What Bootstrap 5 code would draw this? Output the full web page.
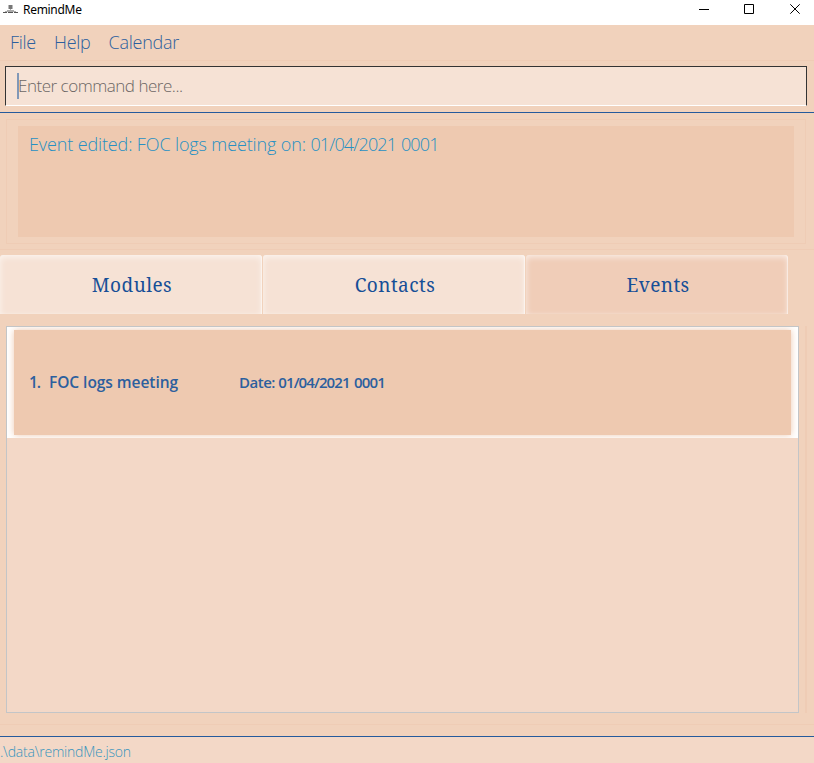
<!DOCTYPE html>
<html lang="en">
<head>
<meta charset="utf-8">
<meta name="viewport" content="width=device-width, initial-scale=1">
<title>RemindMe</title>
<link href="https://cdn.jsdelivr.net/npm/bootstrap@5.3.0/dist/css/bootstrap.min.css" rel="stylesheet">
<style>
body{height:763px;background:#f1d2bc;font-family:"Open Sans","Noto Sans",sans-serif;font-weight:300;color:#2c5f9e}
.titlebar{height:25px;background:#fff;color:#000;font:400 12px/20px "Noto Sans",sans-serif}
.titlebar span{letter-spacing:-.3px}
.menus{height:36px;border-bottom:1px solid #efccb5;font-size:18px;line-height:35px;padding-left:10px;gap:18px}
.menus a{color:#2c5f9e;text-decoration:none;white-space:nowrap;letter-spacing:-.27px}
.cmd{height:51px;padding:5px 7px 0 5px}
.cmd-box{height:40px;border:1px solid #333;border-bottom-color:#fff;background:#f6e2d5;padding-left:11px}
.caret{width:2px;height:26px;background:#8198b7}
.cmd-text{font-size:17px;color:#6b6664;white-space:nowrap;letter-spacing:-.48px;margin-left:-1px}
.result{height:138px;border-top:1px solid #255a9c;border-bottom:1px solid #efccb5;padding:6px 8px 5px 6px}
.result-frame{border:1px solid #efccb5;padding:6px 11px 6px 11px}
.result-box{background:#eec9b0;color:#2790c3;font-size:18px;line-height:25px;padding:6px 11px;white-space:nowrap;letter-spacing:-.13px}
.result-box .stamp{letter-spacing:-.87px;word-spacing:1px}
.tabs{height:64px;padding:5px 26px 0 0;gap:1px}
.tab{background:#f6e2d5;border-radius:3px 3px 0 0;box-shadow:inset 0 2px 6px rgba(255,255,255,.65),inset -1px 0 1px rgba(255,255,255,.5);font-family:"Noto Serif","Droid Serif","DejaVu Serif",serif;font-weight:400;font-size:19px;letter-spacing:.45px;color:#164f97;padding:1px 0 0 2px}
.tab.on{background:#f0cdb8}
.list-zone{height:411px;padding:12px 0 11px 6px;border-bottom:1px solid #efccb5}
.events{width:793px;flex:none;border:1px solid #c3c5c7;background:#f3d8c7}
.rail{width:2px;background:#efccb5;margin:0 7px 0 6px}
.event-row{height:111px;background:#fff;padding:3px 7px 3px 7px}
.event-card{background:#eec9b0;box-shadow:0 0 7px #eec9b0;padding-left:15px;font-size:15.5px;font-weight:600;white-space:nowrap}
.num{width:20px;letter-spacing:-1px}
.ename{width:190px;letter-spacing:-.05px}
.edate{font-size:15px;letter-spacing:-.5px}
.edate .stamp{letter-spacing:-.9px;word-spacing:1.5px}
.foot{height:27px;border-top:1px solid #255a9c;background:#f3d8c7;color:#3694bd;font-size:14px;line-height:29px;white-space:nowrap;letter-spacing:-.22px}
</style>
<script src="https://cdn.jsdelivr.net/npm/bootstrap@5.3.0/dist/js/bootstrap.bundle.min.js"></script>
</head>
<body class="d-flex flex-column overflow-hidden">
<header class="titlebar d-flex flex-shrink-0">
<svg width="23" height="20" viewBox="0 0 23 20" fill="#777"><path d="M8.500 5h4v4h-4z"/><path d="M10 9h1v2h-1zM7 10h7v1H7zM5 11h3v1H5zM13 11h3v1h-3z" fill="#aaa"/><path d="M3 12h4v1H3zM8 11.500h5v1.500H8zM14 12h4v1h-4z" fill="#555"/></svg>
<span>RemindMe</span>
<svg class="ms-auto" width="116" height="20" viewBox="698 0 116 20" fill="none" stroke="#000"><path d="M699 9.500h10M744.500 4.500h9v9h-9z"/><path d="M790.300 4.300l9.400 9.400M799.700 4.300l-9.400 9.400"/></svg>
</header>
<nav class="menus d-flex flex-shrink-0"><a href="#">File</a><a href="#">Help</a><a href="#">Calendar</a></nav>
<section class="cmd flex-shrink-0"><div class="cmd-box d-flex align-items-center"><i class="caret"></i><span class="cmd-text">Enter command here...</span></div></section>
<section class="result flex-shrink-0"><div class="result-frame h-100"><div class="result-box h-100">Event edited: FOC logs meeting on: <span class="stamp">01/04/2021 0001</span></div></div></section>
<div class="tabs d-flex flex-shrink-0">
<div class="tab flex-fill w-100 d-flex align-items-center justify-content-center"><span>Modules</span></div>
<div class="tab flex-fill w-100 d-flex align-items-center justify-content-center"><span>Contacts</span></div>
<div class="tab on flex-fill w-100 d-flex align-items-center justify-content-center"><span>Events</span></div>
</div>
<main class="list-zone d-flex flex-shrink-0">
<div class="events"><div class="event-row overflow-hidden"><div class="event-card h-100 d-flex align-items-center"><span class="num">1.</span><span class="ename">FOC logs meeting</span><span class="edate">Date: <span class="stamp">01/04/2021 0001</span></span></div></div></div>
<div class="rail"></div>
</main>
<div class="flex-fill"></div>
<footer class="foot flex-shrink-0">.\data\remindMe.json</footer>
</body>
</html>
